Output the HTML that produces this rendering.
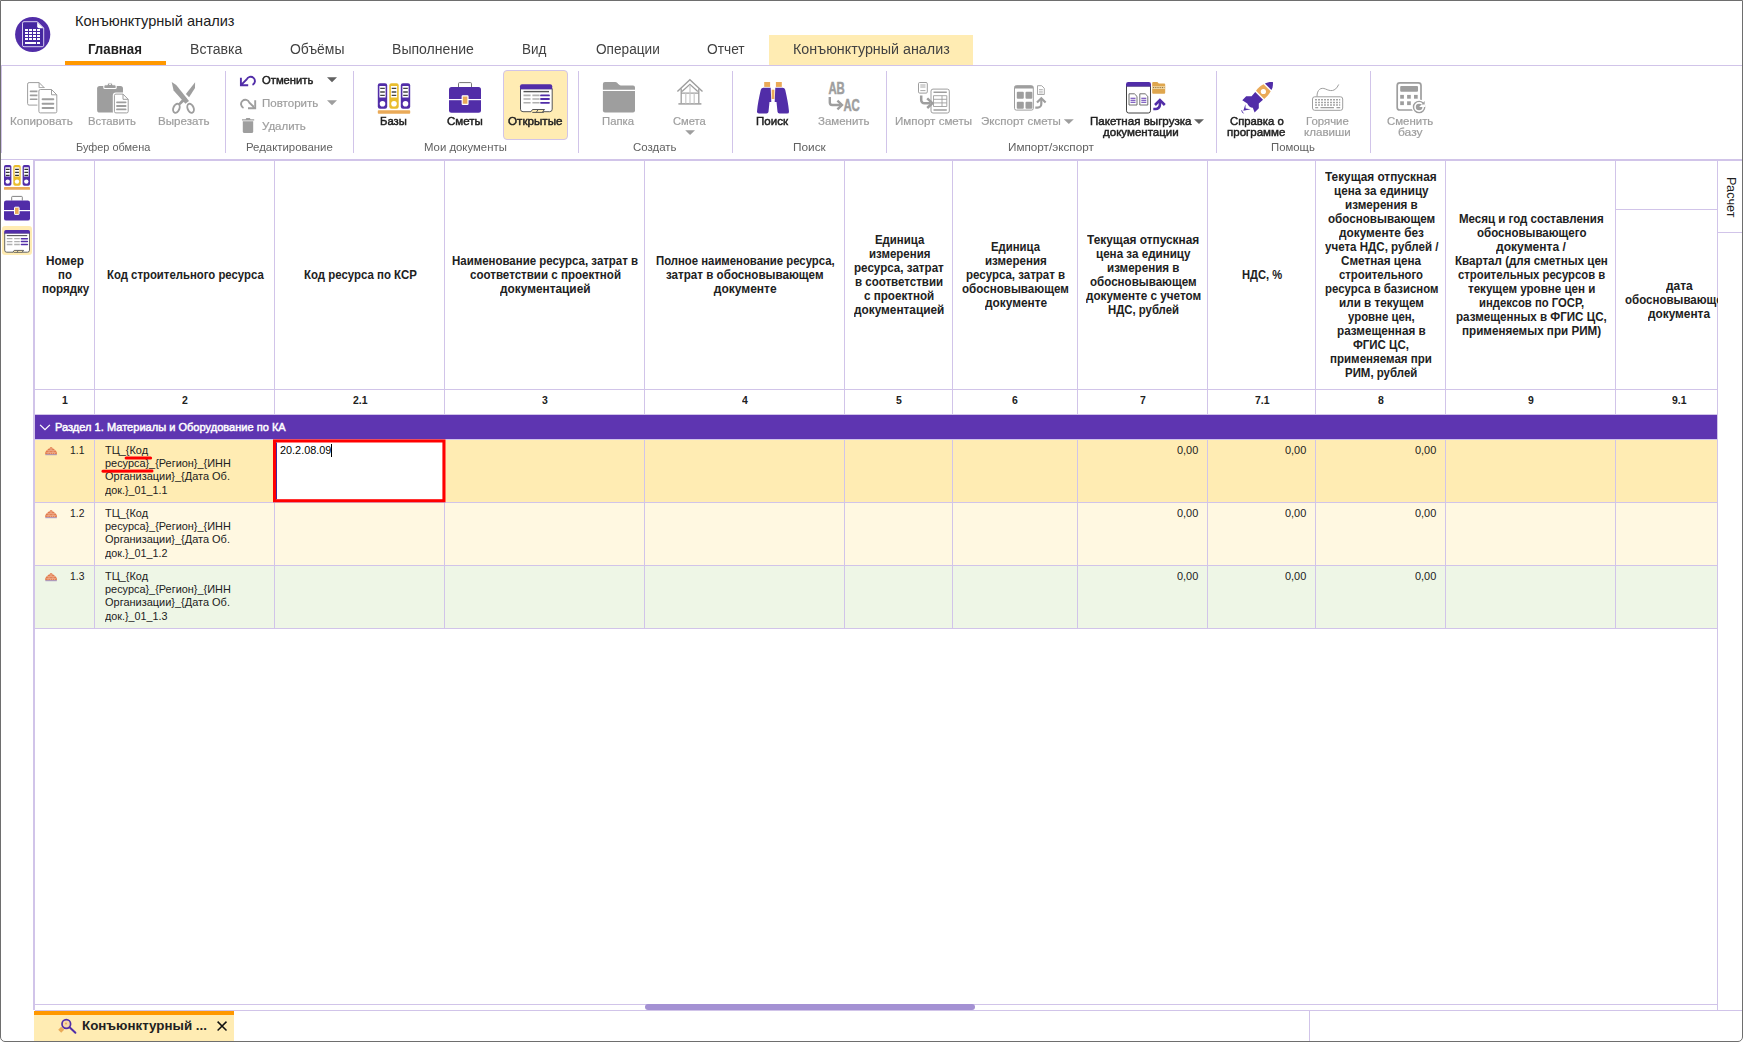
<!DOCTYPE html>
<html lang="ru">
<head>
<meta charset="utf-8">
<title>Конъюнктурный анализ</title>
<style>
html,body{margin:0;padding:0}
body{width:1743px;height:1042px;position:relative;overflow:hidden;background:#fff;font-family:"Liberation Sans",sans-serif}
.a{position:absolute}
.ln{position:absolute;background:#d1c4e9}
.t{position:absolute;white-space:nowrap;line-height:1;transform-origin:0 0}
svg{position:absolute;overflow:visible}
.t0{font-size:15px;font-weight:400;color:#212121}
.t1{font-size:14px;font-weight:700;color:#212121}
.t2{font-size:14px;font-weight:400;color:#424242}
.t3{font-size:11px;font-weight:400;color:#9e9e9e;-webkit-text-stroke:0.2px #9e9e9e}
.t4{font-size:11px;font-weight:400;color:#616161}
.t5{font-size:11px;font-weight:400;color:#212121;-webkit-text-stroke:0.45px #212121}
.t6{font-size:12px;font-weight:700;color:#212121}
.t7{font-size:11px;font-weight:700;color:#212121}
.t8{font-size:11px;font-weight:400;color:#ffffff;-webkit-text-stroke:0.45px #ffffff}
.t9{font-size:11px;font-weight:400;color:#212121}
.t10{font-size:11px;font-weight:400;color:#000000}
.t11{font-size:13px;font-weight:700;color:#212121}

</style>
</head>
<body>
<!-- window frame -->
<div class="a" style="left:0;top:0;width:1741px;height:1040px;border:1px solid #6e6e6e;border-radius:0 0 5px 5px"></div>

<!-- tab strip -->
<div class="a" style="left:769px;top:35px;width:204px;height:30px;background:#ffecb3"></div>
<div class="ln" style="left:1px;top:65px;width:1741px;height:1px"></div>
<div class="a" style="left:65px;top:61px;width:101px;height:4px;background:#ff9800"></div>

<!-- ribbon separators -->
<div class="ln" style="left:1px;top:66px;width:1px;height:87px"></div>
<div class="ln" style="left:225px;top:71px;width:1px;height:82px"></div>
<div class="ln" style="left:353px;top:71px;width:1px;height:82px"></div>
<div class="ln" style="left:578px;top:71px;width:1px;height:82px"></div>
<div class="ln" style="left:732px;top:71px;width:1px;height:82px"></div>
<div class="ln" style="left:886px;top:71px;width:1px;height:82px"></div>
<div class="ln" style="left:1216px;top:71px;width:1px;height:82px"></div>
<div class="ln" style="left:1370px;top:71px;width:1px;height:82px"></div>
<!-- active button -->
<div class="a" style="left:503px;top:70px;width:63px;height:68px;background:#ffecb3;border:1px solid #d1c4e9;border-radius:4px;box-sizing:content-box"></div>
<!-- ribbon bottom -->
<div class="ln" style="left:1px;top:159px;width:1741px;height:1px"></div>
<div class="ln" style="left:34px;top:160px;width:1708px;height:1px"></div>

<!-- sidebar active -->
<div class="a" style="left:2px;top:226px;width:30px;height:29px;background:#ffecb3;border-radius:3px"></div>

<!-- grid -->
<div id="grid">
<!-- row backgrounds -->
<div class="a" style="left:35px;top:415px;width:1682px;height:24px;background:#5e35b1"></div>
<div class="a" style="left:35px;top:439px;width:1682px;height:63px;background:#ffecb3"></div>
<div class="a" style="left:35px;top:502px;width:1682px;height:63px;background:#fff8e1"></div>
<div class="a" style="left:35px;top:565px;width:1682px;height:63px;background:#eef6e6"></div>
<!-- horizontal lines -->
<div class="ln" style="left:35px;top:389px;width:1682px;height:1px"></div>
<div class="ln" style="left:35px;top:414px;width:1682px;height:1px"></div>
<div class="ln" style="left:35px;top:439px;width:1682px;height:1px"></div>
<div class="ln" style="left:1615px;top:209px;width:102px;height:1px"></div>
<div class="ln" style="left:35px;top:502px;width:1682px;height:1px"></div>
<div class="ln" style="left:35px;top:565px;width:1682px;height:1px"></div>
<div class="ln" style="left:35px;top:628px;width:1682px;height:1px"></div>
<!-- vertical lines -->
<div class="ln" style="left:33px;top:160px;width:2px;height:850px"></div>
<div class="ln" style="left:94px;top:161px;width:1px;height:253px"></div>
<div class="ln" style="left:94px;top:439px;width:1px;height:190px"></div>
<div class="ln" style="left:274px;top:161px;width:1px;height:253px"></div>
<div class="ln" style="left:274px;top:439px;width:1px;height:190px"></div>
<div class="ln" style="left:444px;top:161px;width:1px;height:253px"></div>
<div class="ln" style="left:444px;top:439px;width:1px;height:190px"></div>
<div class="ln" style="left:644px;top:161px;width:1px;height:253px"></div>
<div class="ln" style="left:644px;top:439px;width:1px;height:190px"></div>
<div class="ln" style="left:844px;top:161px;width:1px;height:253px"></div>
<div class="ln" style="left:844px;top:439px;width:1px;height:190px"></div>
<div class="ln" style="left:952px;top:161px;width:1px;height:253px"></div>
<div class="ln" style="left:952px;top:439px;width:1px;height:190px"></div>
<div class="ln" style="left:1077px;top:161px;width:1px;height:253px"></div>
<div class="ln" style="left:1077px;top:439px;width:1px;height:190px"></div>
<div class="ln" style="left:1207px;top:161px;width:1px;height:253px"></div>
<div class="ln" style="left:1207px;top:439px;width:1px;height:190px"></div>
<div class="ln" style="left:1315px;top:161px;width:1px;height:253px"></div>
<div class="ln" style="left:1315px;top:439px;width:1px;height:190px"></div>
<div class="ln" style="left:1445px;top:161px;width:1px;height:253px"></div>
<div class="ln" style="left:1445px;top:439px;width:1px;height:190px"></div>
<div class="ln" style="left:1615px;top:161px;width:1px;height:253px"></div>
<div class="ln" style="left:1615px;top:439px;width:1px;height:190px"></div>

<div class="ln" style="left:1717px;top:160px;width:1px;height:850px"></div>
<!-- bottom scroll -->
<div class="ln" style="left:35px;top:1004px;width:1682px;height:1px"></div>
<div class="ln" style="left:35px;top:1010px;width:1707px;height:1px"></div>
<div class="a" style="left:645px;top:1004px;width:330px;height:6px;background:#a491d3;border-radius:3px"></div>
</div>

<!-- edit box -->
<svg width="176" height="66" viewBox="272 438 176 66" style="left:272px;top:438px"><rect x="274.550" y="440.950" width="169.400" height="59.800" fill="#fff" stroke="#ff0000" stroke-width="3.100"/><path d="M276.500 442.500V499.200" stroke="#4527a0" stroke-width="1"/></svg>
<div class="a" style="left:331px;top:444px;width:1px;height:13px;background:#000"></div>
<!-- red marks -->


<!-- bottom tab -->
<div class="a" style="left:34px;top:1011px;width:200px;height:4px;background:#ff9800"></div>
<div class="a" style="left:34px;top:1015px;width:200px;height:26px;background:#ffecb3"></div>
<div class="ln" style="left:1309px;top:1011px;width:1px;height:30px"></div>

<!--ICONS-->
<svg width="1743" height="1042" viewBox="0 0 1743 1042" style="left:0;top:0">
<defs>
 <g id="ic-bases">
  <rect x="0" y="1.2" width="9.4" height="25.6" rx="2.2" fill="#512da8"/>
  <rect x="11.5" y="1.2" width="9.4" height="25.6" rx="2.2" fill="#e9bd2d"/>
  <rect x="23" y="1.2" width="9.4" height="25.6" rx="2.2" fill="#512da8"/>
  <g fill="#fff"><rect x="1.6" y="4" width="6.2" height="11.5"/><rect x="13.1" y="4" width="6.2" height="11.5"/><rect x="24.6" y="4" width="6.2" height="11.5"/>
  <circle cx="4.7" cy="21.8" r="2.8"/><circle cx="16.2" cy="21.8" r="2.8"/><circle cx="27.7" cy="21.8" r="2.8"/></g>
  <g stroke="#444" stroke-width="1.3"><path d="M2.4 6.4h4.6M2.4 10h4.6M2.4 13.4h4.6M13.9 6.4h4.6M13.9 10h4.6M13.9 13.4h4.6M25.4 6.4h4.6M25.4 10h4.6M25.4 13.4h4.6"/></g>
  <rect x="0" y="28.2" width="32.4" height="3.6" rx="0.8" fill="#eaaa58"/>
 </g>
 <g id="ic-case">
  <path d="M9.5 5.2V1.6a1 1 0 0 1 1-1h11a1 1 0 0 1 1 1v3.6" fill="none" stroke="#757575" stroke-width="1"/>
  <rect x="0" y="5" width="32" height="25.7" rx="2.5" fill="#512da8"/>
  <rect x="0" y="17" width="32" height="1.2" fill="#fff"/>
  <rect x="13.2" y="13.8" width="5.8" height="8.6" rx="0.6" fill="#eaaa58" stroke="#fff" stroke-width="1.2"/>
 </g>
 <g id="ic-open">
  <path d="M0.5 4.5V25a2.5 2.5 0 0 0 2.5 2.5h8l1.5 -2.2h12l-1.8 2.2H29.7a2.5 2.5 0 0 0 2.5 -2.5V4.5z" fill="#fff" stroke="#555" stroke-width="1"/>
  <path d="M12.3 28.2h11.5M18 25.6l-1.6 2.4" fill="none" stroke="#555" stroke-width="1"/>
  <path d="M0 5V2a2 2 0 0 1 2 -2h28.2a2 2 0 0 1 2 2V5z" fill="#512da8"/>
  <path d="M3.5 7.4h25.5" stroke="#555" stroke-width="1.4"/>
  <path d="M3.5 11.2h7.1M12.4 11.2h7.2M3.5 14.8h7.1M12.4 14.8h7.2M3.5 18.6h7.1M12.4 18.6h7.2" stroke="#b0b0b0" stroke-width="1.6"/>
  <path d="M21 11.2h8M21 14.8h8M21 18.6h8" stroke="#512da8" stroke-width="1.8" stroke-linecap="round"/>
 </g>
 <path id="doc-s" d="M0 1.5A1.5 1.5 0 0 1 1.5 0H11.5L16.6 5.1V21a1.5 1.5 0 0 1 -1.5 1.5H1.5A1.5 1.5 0 0 1 0 21z"/>
</defs>

<!-- logo -->
<circle cx="32.7" cy="34.5" r="17.6" fill="#512da8"/>
<path d="M24 21.7H37.4L43.7 28V45.2a1.5 1.5 0 0 1 -1.5 1.5H24a1.5 1.5 0 0 1 -1.5 -1.5V23.2a1.5 1.5 0 0 1 1.5 -1.5z" fill="#4527a0" stroke="#d9cff0" stroke-width="1"/>
<path d="M37.2 21.9L43.5 28.2H39.2a2 2 0 0 1 -2 -2z" fill="#fff"/>
<g fill="#fff">
<rect x="25" y="29" width="3" height="2"/><rect x="29" y="29" width="3" height="2"/><rect x="33" y="29" width="3" height="2"/><rect x="37" y="29" width="3" height="2"/>
<rect x="25" y="32" width="3" height="2"/><rect x="29" y="32" width="3" height="2"/><rect x="33" y="32" width="3" height="2"/><rect x="37" y="32" width="3" height="2"/>
<rect x="25" y="35" width="3" height="2"/><rect x="29" y="35" width="3" height="2"/><rect x="33" y="35" width="3" height="2"/><rect x="37" y="35" width="3" height="2"/>
<rect x="25" y="38" width="3" height="2"/><rect x="29" y="38" width="3" height="2"/><rect x="33" y="38" width="3" height="2"/><rect x="37" y="38" width="3" height="2"/>
<rect x="25" y="42" width="11" height="2"/><rect x="37" y="42" width="3" height="2"/>
</g>

<!-- copy -->
<g fill="#fff" stroke="#9e9e9e" stroke-width="1" stroke-linejoin="round">
 <use href="#doc-s" x="27.6" y="82.6"/>
 <path d="M39.1 82.6v5.1h5.1" fill="none"/>
 <path d="M30.5 91.4h7.5M30.5 95.4h7.5M30.5 99.3h7.5" stroke-width="1.6" stroke-linecap="round"/>
 <path d="M40.4 89.5H51.5L56.8 94.8V111.4a1.5 1.5 0 0 1 -1.5 1.5H40.4a1.5 1.5 0 0 1 -1.5 -1.5V91a1.5 1.5 0 0 1 1.5 -1.5z" stroke="#fff" stroke-width="3"/>
 <path d="M40.4 89.5H51.5L56.8 94.8V111.4a1.5 1.5 0 0 1 -1.5 1.5H40.4a1.5 1.5 0 0 1 -1.5 -1.5V91a1.5 1.5 0 0 1 1.5 -1.5z"/>
 <path d="M51.5 89.5v5.3h5.3" fill="none"/>
 <path d="M42.6 99.3h10.7M42.6 103.7h10.7M42.6 108h10.7" stroke-width="2" stroke-linecap="round"/>
</g>

<!-- paste -->
<rect x="97.1" y="86" width="25.9" height="26.6" rx="2.6" fill="#9e9e9e"/>
<path d="M104.800 88.500a1 1 0 0 1 -1 -1v-1.200a1.500 1.500 0 0 1 1.500 -1.500h1.700a3.100 3.100 0 0 1 6 0h1.700a1.500 1.500 0 0 1 1.500 1.500v1.200a1 1 0 0 1 -1 1z" fill="#9e9e9e" stroke="#fff" stroke-width="1.100"/>
<circle cx="110" cy="84.200" r="0.900" fill="#fff"/>
<g fill="#fff" stroke="#9e9e9e" stroke-width="1" stroke-linejoin="round">
 <path d="M115.9 94.1H123L128.2 99.3V111.4a1.5 1.5 0 0 1 -1.5 1.5H115.9a1.5 1.5 0 0 1 -1.5 -1.5V95.6a1.5 1.5 0 0 1 1.5 -1.5z" stroke="#fff" stroke-width="3.2"/>
 <path d="M115.9 94.1H123L128.2 99.3V111.4a1.5 1.5 0 0 1 -1.5 1.5H115.9a1.5 1.5 0 0 1 -1.5 -1.5V95.6a1.5 1.5 0 0 1 1.5 -1.5z"/>
 <path d="M123 94.1v5.2h5.2" fill="none"/>
 <path d="M117 102.3h8.6M117 106h8.6M117 109.4h8.6" stroke-width="1.8" stroke-linecap="round"/>
</g>

<!-- scissors -->
<g fill="#9e9e9e">
 <path d="M171.700 82L176.200 85L189 101L185.400 103.700L173.600 90.500z"/>
 <path d="M195.100 82.300L195 88L189.100 97.300L185.900 93.900z"/>
 <path d="M184.7 96.4L186.8 98.9L180.4 105L178.3 103.4z"/>
</g>
<g fill="none" stroke="#9e9e9e" stroke-width="1.9">
 <ellipse cx="190.6" cy="108.3" rx="3" ry="4.7" transform="rotate(-22 190.6 108.3)"/>
 <ellipse cx="176.4" cy="108.3" rx="3" ry="4.7" transform="rotate(22 176.4 108.3)"/>
</g>

<!-- undo / redo / trash -->
<g fill="none" stroke="#512da8" stroke-width="1.900" stroke-linejoin="miter">
 <path d="M240.900 77.800V85.200H248.200M241.200 84.900L246.600 79.500A4.300 4.300 0 1 1 252.500 84.900"/>
</g>
<g fill="none" stroke="#9e9e9e" stroke-width="1.900">
 <path d="M255.200 100.200V108.300H248M254.900 108L249.400 102.700A4.300 4.300 0 1 0 243.500 108"/>
</g>
<path d="M242 119.2h3.6l0.8 -1.1h3.4l0.8 1.1h3.6v1.2H242z" fill="#9e9e9e"/>
<path d="M242.8 121.3h10.4v10.2a1.6 1.6 0 0 1 -1.6 1.6h-7.2a1.6 1.6 0 0 1 -1.6 -1.6z" fill="#9e9e9e"/>
<path d="M327 77.3h10l-5 5z" fill="#616161"/>
<path d="M327 100.2h10l-5 5z" fill="#9e9e9e"/>

<!-- my documents -->
<use href="#ic-bases" x="377.8" y="82"/>
<use href="#ic-case" x="449" y="82"/>
<use href="#ic-open" x="520" y="84.2"/>

<!-- folder -->
<path d="M602.9 84a2 2 0 0 1 2 -2h10.4c2.4 0 3 3.4 5.6 3.4H633a2 2 0 0 1 2 2V89.8H602.9z" fill="#9e9e9e"/>
<path d="M602.9 91H635V110.5a2 2 0 0 1 -2 2H604.9a2 2 0 0 1 -2 -2z" fill="#9e9e9e"/>

<!-- house -->
<g fill="none" stroke="#9e9e9e">
 <path d="M677.4 91.4L689.9 79.8L702.5 91.4" stroke-width="1.4"/>
 <path d="M681.2 88.5V103.4M698.8 88.5V103.4M681.2 93.2H698.8M682 91.5L689.9 84.3L697.8 91.5" stroke-width="1.3"/>
 <path d="M678.4 103.9H701.4" stroke-width="1.5"/>
 <path d="M685.8 93.2V103.4M690 86V103.4M694.2 93.2V103.4" stroke="#c9c9c9" stroke-width="1.2"/>
</g>
<path d="M685.2 130.3h9.8l-4.9 4.6z" fill="#9e9e9e"/>

<!-- binoculars -->
<rect x="764.2" y="82" width="5.9" height="4.9" fill="#eaaa58"/>
<rect x="775.9" y="82" width="5.9" height="4.9" fill="#eaaa58"/>
<rect x="771.7" y="89.7" width="2.7" height="9.3" fill="#eaaa58"/>
<path d="M763.4 87.8h7.3l0.6 14.3h-1.8l-1 9.7a2 2 0 0 1 -2 1.8H759a2 2 0 0 1 -2 -2.2c0.6 -6.6 2 -14 3.800 -21.600a2.700 2.700 0 0 1 2.600 -2z" fill="#512da8"/>
<path d="M782.600 87.800h-7.300l-0.600 14.300h1.800l1 9.700a2 2 0 0 0 2 1.800H787a2 2 0 0 0 2 -2.200c-0.600 -6.600 -2 -14 -3.800 -21.600a2.700 2.700 0 0 0 -2.600 -2z" fill="#512da8"/>

<!-- replace -->
<g font-family="'Liberation Sans',sans-serif" font-weight="700" fill="#9e9e9e" stroke="#9e9e9e" stroke-width="0.5" font-size="15.8">
 <text x="0" y="0" transform="translate(828.4 94.4) scale(0.72 1)">AB</text>
 <text x="0" y="0" transform="translate(843.4 111.4) scale(0.72 1)">AC</text>
</g>
<path d="M829.8 97V102.600a2.400 2.400 0 0 0 2.400 2.400H840.500" fill="none" stroke="#9e9e9e" stroke-width="2.400"/>
<path d="M837.400 100.600L842 105L837.400 109.400" fill="none" stroke="#9e9e9e" stroke-width="2.400"/>

<!-- import -->
<g fill="#fff" stroke="#9e9e9e" stroke-width="1">
 <rect x="918.5" y="82.500" width="8.800" height="10.600" rx="1.2"/>
 <path d="M920.300 85h5.200M920.300 87h5.200M920.300 90.600h5.200" stroke-width="0.9"/>
 <rect x="931" y="89.100" width="18.300" height="23.900" rx="2"/>
 <path d="M933.500 92.200h13.300M933.500 110h13.300" stroke-width="1.500"/>
 <path d="M933.500 95.700h13.300v10.800h-13.300zM933.500 99.300h13.300M933.500 102.900h13.300M942 95.700v10.800" stroke-width="0.9" fill="none"/>
</g>
<path d="M921.200 95.500v4.500a3.200 3.200 0 0 0 3.200 3.200H930" fill="none" stroke="#fff" stroke-width="4.500"/>
<path d="M921.200 95.500v4.500a3.200 3.200 0 0 0 3.200 3.200H930" fill="none" stroke="#9e9e9e" stroke-width="2.500"/>
<path d="M927.200 98.400L932.400 103.200L927.200 108" fill="none" stroke="#9e9e9e" stroke-width="2.500"/>

<!-- export -->
<rect x="1014.500" y="85.700" width="18.800" height="24.400" rx="1.800" fill="#fff" stroke="#9e9e9e" stroke-width="1"/>
<path d="M1014.500 88.600V87.500a1.800 1.800 0 0 1 1.800 -1.800h15.200a1.800 1.800 0 0 1 1.800 1.800V88.600z" fill="#9e9e9e"/>
<g fill="#9e9e9e"><rect x="1016.800" y="91.700" width="7" height="7" rx="1"/><rect x="1025.500" y="91.700" width="6.800" height="7" rx="1"/><rect x="1016.800" y="101.700" width="7" height="7" rx="1"/><rect x="1025.500" y="101.700" width="6.800" height="7" rx="1"/></g>
<path d="M1037.500 85.700h4.200l2.600 2.600v6.200h-6.800z" fill="#fff" stroke="#9e9e9e" stroke-width="0.9"/>
<path d="M1039 89.500h3.800M1039 91.200h3.800M1039 92.900h3.800" stroke="#9e9e9e" stroke-width="0.7"/>
<path d="M1035.300 107.600h2.400a3.600 3.600 0 0 0 3.600 -3.600V99" fill="none" stroke="#9e9e9e" stroke-width="2.200"/>
<path d="M1037 102.500L1041.300 98.200L1045.600 102.500" fill="none" stroke="#9e9e9e" stroke-width="2.200"/>
<path d="M1063.800 119.200h10l-5 4.800z" fill="#9e9e9e"/>

<!-- batch export -->
<path d="M1126.500 86V110.800a2.200 2.200 0 0 0 2.200 2.200h19.600a2.200 2.200 0 0 0 2.200 -2.200V86z" fill="#fff" stroke="#424242" stroke-width="1"/>
<path d="M1126 86.600V84.200a2.200 2.200 0 0 1 2.200 -2.200h20.600a2.200 2.200 0 0 1 2.200 2.200V86.600z" fill="#512da8"/>
<g fill="#fff" stroke="#616161" stroke-width="0.9">
 <path d="M1129 93.800h5.400l2.600 2.600v8.600h-8z"/><path d="M1139.800 93.800h5.400l2.600 2.600v8.600h-8z"/>
</g>
<path d="M1130.500 98.300h5M1130.500 100.300h5M1130.500 102.300h5M1141.300 98.300h5M1141.300 100.300h5M1141.300 102.300h5" stroke="#5e35b1" stroke-width="1.100"/>
<path d="M1152.200 83a1 1 0 0 1 1 -1h4.200l1.400 1.400h5.400a1 1 0 0 1 1 1V92.800a1 1 0 0 1 -1 1h-11a1 1 0 0 1 -1 -1z" fill="#dfa64e"/>
<path d="M1152.200 86.200h13v2.800h-13z" fill="#f3d9a4"/>
<path d="M1153 87.600h11.500" stroke="#8d6e3f" stroke-width="1" stroke-dasharray="1 0.800"/>
<path d="M1153.300 109h2.400a4.200 4.200 0 0 0 4.200 -4.200V101" fill="none" stroke="#512da8" stroke-width="2.600"/>
<path d="M1155 105L1159.900 100.100L1164.800 105" fill="none" stroke="#512da8" stroke-width="2.600"/>
<path d="M1194 119.200h10l-5 4.800z" fill="#616161"/>

<!-- rocket -->
<g fill="#512da8">
 <path d="M1272.900 82C1269.500 81.800 1266.800 82.400 1264.900 83.500L1271.400 90C1272.600 88 1273.200 85.400 1272.900 82z"/>
 <path d="M1255.200 91.900L1263 99.700L1258.800 103.500V108.200L1254.600 112.500L1252.800 107.800C1250.500 107.500 1248 105.500 1247.300 103.400L1242.300 100.300L1246.200 96.200L1251.600 96.200z"/>
 <path d="M1245.400 104.200L1243.300 110.800L1250.700 109.200L1245.600 108.600z"/>
 <path d="M1241.400 110C1241.400 112 1242.500 113.500 1244.300 113.600C1243 112.600 1242.300 111.500 1242 110z"/>
</g>
<path d="M1263.600 84.200L1270.700 91.300C1269 94.500 1266.800 97 1264.200 98.900L1256 90.700C1258 88 1260.500 85.800 1263.600 84.200z" fill="#eaaa58"/>
<circle cx="1263.400" cy="91.500" r="2.600" fill="#fff"/>

<!-- keyboard -->
<rect x="1312.500" y="96.800" width="30.200" height="13.500" rx="2.200" fill="#fff" stroke="#9e9e9e" stroke-width="1"/>
<path d="M1317 96.500c0 -7 4 -9.500 8.500 -7.500s9.500 3.500 13.200 -4.500" fill="none" stroke="#9e9e9e" stroke-width="1"/>
<path d="M1315.200 99.800h25M1315.200 102.400h25M1315.200 105h25" stroke="#8f8f8f" stroke-width="1.500" stroke-dasharray="1.600 1.400"/>
<path d="M1315.200 107.700h3M1320.500 107.700h13.500M1336.500 107.700h3.700" stroke="#9e9e9e" stroke-width="1.300"/>

<!-- calculator -->
<rect x="1397.200" y="82.800" width="23.800" height="27.200" rx="2.600" fill="#fff" stroke="#9e9e9e" stroke-width="1.700"/>
<rect x="1400.200" y="86" width="17.800" height="5.800" rx="1" fill="#9e9e9e"/>
<g fill="#9e9e9e"><rect x="1400.200" y="94.900" width="3.700" height="3.800"/><rect x="1407.100" y="94.900" width="3.700" height="3.800"/><rect x="1414" y="94.900" width="3.700" height="3.800"/><rect x="1400.200" y="101.300" width="3.700" height="3.800"/><rect x="1407.100" y="101.300" width="3.700" height="3.800"/></g>
<circle cx="1419.100" cy="107" r="7.500" fill="#fff"/>
<circle cx="1419.100" cy="107" r="5.600" fill="#fff" stroke="#9e9e9e" stroke-width="1.400"/>
<circle cx="1419.100" cy="107" r="3.300" fill="#9e9e9e"/>
<path d="M1419.100 107L1425.500 100.600V107z" fill="#fff"/>
<path d="M1421.300 104.400h3.400v-3.400z" fill="#9e9e9e"/>

<!-- sidebar icons -->
<g>
 <rect x="4" y="165" width="7.400" height="20.800" rx="1.800" fill="#512da8"/>
 <rect x="13.300" y="165" width="7.400" height="20.800" rx="1.800" fill="#e9bd2d"/>
 <rect x="22.600" y="165" width="7.400" height="20.800" rx="1.800" fill="#512da8"/>
 <g fill="#fff"><rect x="5.300" y="167.300" width="4.800" height="9.200"/><rect x="14.600" y="167.300" width="4.800" height="9.200"/><rect x="23.900" y="167.300" width="4.800" height="9.200"/>
 <circle cx="7.700" cy="181.600" r="2.200"/><circle cx="17" cy="181.600" r="2.200"/><circle cx="26.300" cy="181.600" r="2.200"/></g>
 <path d="M5.800 169.400h3.800M5.800 172.400h3.800M5.800 175.400h3.800M15.100 169.400h3.800M15.100 172.400h3.800M15.100 175.400h3.800M24.400 169.400h3.800M24.400 172.400h3.800M24.400 175.400h3.800" stroke="#333" stroke-width="1.300"/>
 <rect x="4" y="187" width="26" height="2.800" rx="0.600" fill="#eaaa58"/>
</g>
<g>
 <path d="M11.700 200.500V197.200a0.800 0.800 0 0 1 0.800 -0.800h9a0.800 0.800 0 0 1 0.800 0.800v3.300" fill="none" stroke="#757575" stroke-width="0.900"/>
 <rect x="4" y="200.400" width="26" height="20.200" rx="2.200" fill="#512da8"/>
 <rect x="4" y="210" width="26" height="1.200" fill="#fff"/>
 <rect x="14.500" y="207.200" width="4.600" height="7.200" rx="0.500" fill="#eaaa58" stroke="#fff" stroke-width="1"/>
</g>
<g>
 <path d="M4.700 233V250.200a2 2 0 0 0 2 2h6.300l1.200 -1.800h9.400l-1.400 1.800h5.300a2 2 0 0 0 2 -2V233z" fill="#fff" stroke="#555" stroke-width="0.900"/>
 <path d="M13.500 252.400h8.800M18.200 250.600l-1.200 1.800" fill="none" stroke="#555" stroke-width="0.800"/>
 <path d="M4.200 233.600V231.700a1.600 1.600 0 0 1 1.600 -1.600h22.600a1.600 1.600 0 0 1 1.600 1.600V233.600z" fill="#512da8"/>
 <path d="M6.800 235.600h20.400" stroke="#555" stroke-width="1.100"/>
 <path d="M6.800 238.700h5.600M14.200 238.700h5.600M6.800 241.600h5.600M14.200 241.600h5.600M6.800 244.500h5.600M14.200 244.500h5.600" stroke="#b0b0b0" stroke-width="1.300"/>
 <path d="M21.400 238.700h6M21.400 241.600h6M21.400 244.500h6" stroke="#512da8" stroke-width="1.500" stroke-linecap="round"/>
</g>

<!-- section chevron -->
<path d="M40.100 424.900L45 429.700L49.900 424.900" fill="none" stroke="#fff" stroke-width="1.300"/>

<!-- row icons -->
<g id="brick">
 <path d="M50.200 447.200h1.800l0.900 1.600h1.100l1 1.800h0.900l1 2.200v1.400H45.200v-1.400l1 -2.200h0.900l1 -1.800h1.100z" fill="#e27a4c"/>
 <path d="M47.300 450.700h7.600M46.300 452.700h9.600M49.700 448.900h2.800" stroke="#f9d9c2" stroke-width="0.500"/>
 <path d="M49 450.800v1.800M51 448.900v1.800M53 450.800v1.800M48 452.800v1.400M50.500 452.800v1.400M52.500 452.800v1.400M54.500 452.800v1.400" stroke="#f9d9c2" stroke-width="0.400"/>
 <path d="M45.400 454.700h11.400" stroke="#8c78b8" stroke-width="0.800"/>
</g>
<use href="#brick" y="63"/>
<use href="#brick" y="126"/>

<!-- bottom tab icon -->
<path d="M58.200 1029.700L61.200 1026.700L64.200 1029.700L61.200 1032.700z" fill="#eaaa58"/>
<circle cx="66.300" cy="1024" r="4.300" fill="#f7d9a8" stroke="#512da8" stroke-width="1.700"/>
<circle cx="66" cy="1023.400" r="1" fill="#eaaa58"/>
<path d="M69.800 1027.600L75.400 1032.800" stroke="#512da8" stroke-width="2" stroke-linecap="round"/>
<path d="M217.600 1021.600L226.500 1030.500M226.500 1021.600L217.600 1030.500" stroke="#111" stroke-width="1.500"/>
</svg>
<!--/ICONS-->


<span class="t t0" style="left:74.6px;top:12.6px;transform:scaleX(0.971)">Конъюнктурный анализ</span>
<span class="t t6" style="left:46.2px;top:254.8px;transform:scaleX(0.981)">Номер</span>
<span class="t t6" style="left:58.3px;top:268.8px;transform:scaleX(0.952)">по</span>
<span class="t t6" style="left:41.6px;top:282.8px;transform:scaleX(0.964)">порядку</span>
<span class="t t6" style="left:106.8px;top:268.8px;transform:scaleX(0.947)">Код строительного ресурса</span>
<span class="t t6" style="left:303.8px;top:268.8px;transform:scaleX(0.953)">Код ресурса по КСР</span>
<span class="t t6" style="left:452.2px;top:254.8px;transform:scaleX(0.955)">Наименование ресурса, затрат в</span>
<span class="t t6" style="left:469.7px;top:268.8px;transform:scaleX(0.963)">соответствии с проектной</span>
<span class="t t6" style="left:500.0px;top:282.8px;transform:scaleX(0.988)">документацией</span>
<span class="t t6" style="left:655.9px;top:254.8px;transform:scaleX(0.945)">Полное наименование ресурса,</span>
<span class="t t6" style="left:666.4px;top:268.8px;transform:scaleX(0.968)">затрат в обосновывающем</span>
<span class="t t6" style="left:713.8px;top:282.8px;transform:scaleX(1.000)">документе</span>
<span class="t t6" style="left:874.6px;top:233.8px;transform:scaleX(0.951)">Единица</span>
<span class="t t6" style="left:868.5px;top:247.8px;transform:scaleX(0.956)">измерения</span>
<span class="t t6" style="left:854.3px;top:261.8px;transform:scaleX(0.968)">ресурса, затрат</span>
<span class="t t6" style="left:855.2px;top:275.8px;transform:scaleX(0.960)">в соответствии</span>
<span class="t t6" style="left:864.1px;top:289.8px;transform:scaleX(0.969)">с проектной</span>
<span class="t t6" style="left:854.1px;top:303.8px;transform:scaleX(0.986)">документацией</span>
<span class="t t6" style="left:991.2px;top:240.8px;transform:scaleX(0.945)">Единица</span>
<span class="t t6" style="left:984.9px;top:254.8px;transform:scaleX(0.961)">измерения</span>
<span class="t t6" style="left:966.2px;top:268.8px;transform:scaleX(0.958)">ресурса, затрат в</span>
<span class="t t6" style="left:962.3px;top:282.8px;transform:scaleX(0.967)">обосновывающем</span>
<span class="t t6" style="left:984.6px;top:296.8px;transform:scaleX(0.990)">документе</span>
<span class="t t6" style="left:1087.0px;top:233.8px;transform:scaleX(0.989)">Текущая отпускная</span>
<span class="t t6" style="left:1096.0px;top:247.8px;transform:scaleX(0.969)">цена за единицу</span>
<span class="t t6" style="left:1107.0px;top:261.8px;transform:scaleX(0.966)">измерения в</span>
<span class="t t6" style="left:1089.9px;top:275.8px;transform:scaleX(0.965)">обосновывающем</span>
<span class="t t6" style="left:1085.7px;top:289.8px;transform:scaleX(0.975)">документе с учетом</span>
<span class="t t6" style="left:1107.7px;top:303.8px;transform:scaleX(0.946)">НДС, рублей</span>
<span class="t t6" style="left:1242.1px;top:268.8px;transform:scaleX(0.930)">НДС, %</span>
<span class="t t6" style="left:1325.4px;top:170.8px;transform:scaleX(0.983)">Текущая отпускная</span>
<span class="t t6" style="left:1334.0px;top:184.8px;transform:scaleX(0.970)">цена за единицу</span>
<span class="t t6" style="left:1344.8px;top:198.8px;transform:scaleX(0.971)">измерения в</span>
<span class="t t6" style="left:1327.7px;top:212.8px;transform:scaleX(0.970)">обосновывающем</span>
<span class="t t6" style="left:1338.7px;top:226.8px;transform:scaleX(0.986)">документе без</span>
<span class="t t6" style="left:1324.5px;top:240.8px;transform:scaleX(0.964)">учета НДС, рублей /</span>
<span class="t t6" style="left:1341.2px;top:254.8px;transform:scaleX(0.974)">Сметная цена</span>
<span class="t t6" style="left:1339.2px;top:268.8px;transform:scaleX(0.944)">строительного</span>
<span class="t t6" style="left:1324.5px;top:282.8px;transform:scaleX(0.950)">ресурса в базисном</span>
<span class="t t6" style="left:1338.7px;top:296.8px;transform:scaleX(0.975)">или в текущем</span>
<span class="t t6" style="left:1347.8px;top:310.8px;transform:scaleX(0.948)">уровне цен,</span>
<span class="t t6" style="left:1336.9px;top:324.8px;transform:scaleX(0.974)">размещенная в</span>
<span class="t t6" style="left:1353.2px;top:338.8px;transform:scaleX(0.957)">ФГИС ЦС,</span>
<span class="t t6" style="left:1330.3px;top:352.8px;transform:scaleX(0.961)">применяемая при</span>
<span class="t t6" style="left:1345.0px;top:366.8px;transform:scaleX(0.954)">РИМ, рублей</span>
<span class="t t6" style="left:1458.9px;top:212.8px;transform:scaleX(0.960)">Месяц и год составления</span>
<span class="t t6" style="left:1476.5px;top:226.8px;transform:scaleX(0.961)">обосновывающего</span>
<span class="t t6" style="left:1496.2px;top:240.8px;transform:scaleX(1.006)">документа /</span>
<span class="t t6" style="left:1454.8px;top:254.8px;transform:scaleX(0.966)">Квартал (для сметных цен</span>
<span class="t t6" style="left:1457.6px;top:268.8px;transform:scaleX(0.943)">строительных ресурсов в</span>
<span class="t t6" style="left:1467.5px;top:282.8px;transform:scaleX(0.966)">текущем уровне цен и</span>
<span class="t t6" style="left:1478.7px;top:296.8px;transform:scaleX(0.940)">индексов по ГОСР,</span>
<span class="t t6" style="left:1455.9px;top:310.8px;transform:scaleX(0.966)">размещенных в ФГИС ЦС,</span>
<span class="t t6" style="left:1461.7px;top:324.8px;transform:scaleX(0.971)">применяемых при РИМ)</span>
<span class="t t6" style="left:1665.9px;top:279.8px;transform:scaleX(0.995)">дата</span>
<span class="t t6" style="left:1624.5px;top:293.8px;transform:scaleX(0.961)">обосновывающего</span>
<span class="t t6" style="left:1648.2px;top:307.8px;transform:scaleX(0.987)">документа</span>
<span class="t t7" style="left:61.9px;top:395.0px;transform:scaleX(0.950)">1</span>
<span class="t t7" style="left:181.9px;top:395.0px;transform:scaleX(0.950)">2</span>
<span class="t t7" style="left:352.5px;top:395.0px;transform:scaleX(0.950)">2.1</span>
<span class="t t7" style="left:541.9px;top:395.0px;transform:scaleX(0.950)">3</span>
<span class="t t7" style="left:741.9px;top:395.0px;transform:scaleX(0.950)">4</span>
<span class="t t7" style="left:895.9px;top:395.0px;transform:scaleX(0.950)">5</span>
<span class="t t7" style="left:1012.4px;top:395.0px;transform:scaleX(0.950)">6</span>
<span class="t t7" style="left:1139.9px;top:395.0px;transform:scaleX(0.950)">7</span>
<span class="t t7" style="left:1254.5px;top:395.0px;transform:scaleX(0.950)">7.1</span>
<span class="t t7" style="left:1377.9px;top:395.0px;transform:scaleX(0.950)">8</span>
<span class="t t7" style="left:1527.9px;top:395.0px;transform:scaleX(0.950)">9</span>
<span class="t t7" style="left:1671.5px;top:395.0px;transform:scaleX(0.950)">9.1</span>
<span class="t t8" style="left:54.6px;top:422.0px;transform:scaleX(1.005)">Раздел 1. Материалы и Оборудование по КА</span>
<span class="t t9" style="left:69.8px;top:444.7px;transform:scaleX(0.941)">1.1</span>
<span class="t t9" style="left:104.9px;top:444.7px;transform:scaleX(0.992)">ТЦ_{Код</span>
<span class="t t9" style="left:104.9px;top:457.7px;transform:scaleX(0.991)">ресурса}_{Регион}_{ИНН</span>
<span class="t t9" style="left:104.9px;top:470.7px;transform:scaleX(0.997)">Организации}_{Дата Об.</span>
<span class="t t9" style="left:104.9px;top:485.0px;transform:scaleX(0.979)">док.}_01_1.1</span>
<span class="t t9" style="left:1177.1px;top:444.7px;transform:scaleX(0.994)">0,00</span>
<span class="t t9" style="left:1285.1px;top:444.7px;transform:scaleX(0.994)">0,00</span>
<span class="t t9" style="left:1415.1px;top:444.7px;transform:scaleX(0.994)">0,00</span>
<span class="t t9" style="left:69.8px;top:507.7px;transform:scaleX(0.941)">1.2</span>
<span class="t t9" style="left:104.9px;top:507.7px;transform:scaleX(0.992)">ТЦ_{Код</span>
<span class="t t9" style="left:104.9px;top:520.7px;transform:scaleX(0.991)">ресурса}_{Регион}_{ИНН</span>
<span class="t t9" style="left:104.9px;top:533.7px;transform:scaleX(0.997)">Организации}_{Дата Об.</span>
<span class="t t9" style="left:104.9px;top:548.0px;transform:scaleX(0.979)">док.}_01_1.2</span>
<span class="t t9" style="left:1177.1px;top:507.7px;transform:scaleX(0.994)">0,00</span>
<span class="t t9" style="left:1285.1px;top:507.7px;transform:scaleX(0.994)">0,00</span>
<span class="t t9" style="left:1415.1px;top:507.7px;transform:scaleX(0.994)">0,00</span>
<span class="t t9" style="left:69.8px;top:570.7px;transform:scaleX(0.941)">1.3</span>
<span class="t t9" style="left:104.9px;top:570.7px;transform:scaleX(0.992)">ТЦ_{Код</span>
<span class="t t9" style="left:104.9px;top:583.7px;transform:scaleX(0.991)">ресурса}_{Регион}_{ИНН</span>
<span class="t t9" style="left:104.9px;top:596.7px;transform:scaleX(0.997)">Организации}_{Дата Об.</span>
<span class="t t9" style="left:104.9px;top:611.0px;transform:scaleX(0.979)">док.}_01_1.3</span>
<span class="t t9" style="left:1177.1px;top:570.7px;transform:scaleX(0.994)">0,00</span>
<span class="t t9" style="left:1285.1px;top:570.7px;transform:scaleX(0.994)">0,00</span>
<span class="t t9" style="left:1415.1px;top:570.7px;transform:scaleX(0.994)">0,00</span>
<span class="t t10" style="left:279.6px;top:444.5px;transform:scaleX(0.988)">20.2.08.09</span>
<span class="t t11" style="left:82.1px;top:1019.0px;transform:scaleX(1.026)">Конъюнктурный ...</span>
<!-- side panel -->
<div class="a" style="left:1718px;top:161px;width:24px;height:849px;background:#fff"></div>
<div class="ln" style="left:1718px;top:232px;width:24px;height:1px"></div>
<div class="a" style="left:1718px;top:160px;width:24px;height:72px"><span style="position:absolute;left:20.200px;top:17px;font-size:13px;line-height:1;color:#212121;white-space:nowrap;transform-origin:0 0;transform:rotate(90deg) scaleX(0.980)">Расчет</span></div>
<div id="txt" style="position:absolute;left:0;top:0;width:1743px;height:1042px;will-change:transform">
<span class="t t1" style="left:88.3px;top:42.1px;transform:scaleX(0.947)">Главная</span>
<span class="t t2" style="left:189.6px;top:42.1px;transform:scaleX(1.007)">Вставка</span>
<span class="t t2" style="left:289.9px;top:42.1px;transform:scaleX(0.997)">Объёмы</span>
<span class="t t2" style="left:391.6px;top:42.1px;transform:scaleX(1.004)">Выполнение</span>
<span class="t t2" style="left:522.0px;top:42.1px;transform:scaleX(0.963)">Вид</span>
<span class="t t2" style="left:595.6px;top:42.1px;transform:scaleX(0.974)">Операции</span>
<span class="t t2" style="left:707.3px;top:42.1px;transform:scaleX(0.981)">Отчет</span>
<span class="t t2" style="left:792.6px;top:42.1px;transform:scaleX(1.022)">Конъюнктурный анализ</span>
<span class="t t3" style="left:10.1px;top:116.2px;transform:scaleX(1.060)">Копировать</span>
<span class="t t3" style="left:88.3px;top:116.2px;transform:scaleX(1.030)">Вставить</span>
<span class="t t3" style="left:157.6px;top:116.2px;transform:scaleX(1.053)">Вырезать</span>
<span class="t t4" style="left:75.6px;top:142.2px;transform:scaleX(0.994)">Буфер обмена</span>
<span class="t t5" style="left:261.6px;top:75.4px;transform:scaleX(1.021)">Отменить</span>
<span class="t t3" style="left:261.6px;top:98.4px;transform:scaleX(1.048)">Повторить</span>
<span class="t t3" style="left:261.6px;top:121.0px;transform:scaleX(1.043)">Удалить</span>
<span class="t t4" style="left:245.6px;top:142.2px;transform:scaleX(1.036)">Редактирование</span>
<span class="t t5" style="left:379.6px;top:116.2px;transform:scaleX(1.024)">Базы</span>
<span class="t t5" style="left:446.6px;top:116.2px;transform:scaleX(1.047)">Сметы</span>
<span class="t t5" style="left:508.4px;top:116.2px;transform:scaleX(1.059)">Открытые</span>
<span class="t t4" style="left:423.6px;top:142.2px;transform:scaleX(1.033)">Мои документы</span>
<span class="t t3" style="left:602.1px;top:116.2px;transform:scaleX(1.029)">Папка</span>
<span class="t t3" style="left:672.6px;top:116.2px;transform:scaleX(1.016)">Смета</span>
<span class="t t4" style="left:632.6px;top:142.2px;transform:scaleX(1.042)">Создать</span>
<span class="t t5" style="left:756.4px;top:116.2px;transform:scaleX(1.051)">Поиск</span>
<span class="t t3" style="left:817.6px;top:116.2px;transform:scaleX(1.043)">Заменить</span>
<span class="t t4" style="left:792.6px;top:142.2px;transform:scaleX(1.076)">Поиск</span>
<span class="t t3" style="left:895.4px;top:116.2px;transform:scaleX(1.051)">Импорт сметы</span>
<span class="t t3" style="left:980.6px;top:116.2px;transform:scaleX(1.048)">Экспорт сметы</span>
<span class="t t4" style="left:1007.6px;top:142.2px;transform:scaleX(1.065)">Импорт/экспорт</span>
<span class="t t5" style="left:1090.1px;top:116.2px;transform:scaleX(1.053)">Пакетная выгрузка</span>
<span class="t t5" style="left:1102.6px;top:127.4px;transform:scaleX(1.049)">документации</span>
<span class="t t5" style="left:1229.6px;top:116.2px;transform:scaleX(1.028)">Справка о</span>
<span class="t t5" style="left:1227.1px;top:127.4px;transform:scaleX(1.047)">программе</span>
<span class="t t3" style="left:1305.6px;top:116.2px;transform:scaleX(1.036)">Горячие</span>
<span class="t t3" style="left:1303.6px;top:127.4px;transform:scaleX(1.053)">клавиши</span>
<span class="t t3" style="left:1387.1px;top:116.2px;transform:scaleX(1.038)">Сменить</span>
<span class="t t3" style="left:1397.6px;top:127.4px;transform:scaleX(1.093)">базу</span>
<span class="t t4" style="left:1270.6px;top:142.2px;transform:scaleX(1.031)">Помощь</span>
</div>
<svg width="70" height="24" viewBox="95 452 70 24" style="left:95px;top:452px">
<path d="M126.100 457.900H150.600" stroke="#ff0000" stroke-width="3" stroke-linecap="round"/>
<path d="M102.900 471.200L152 471" stroke="#ff0000" stroke-width="3" stroke-linecap="round"/>
</svg>
</body>
</html>
